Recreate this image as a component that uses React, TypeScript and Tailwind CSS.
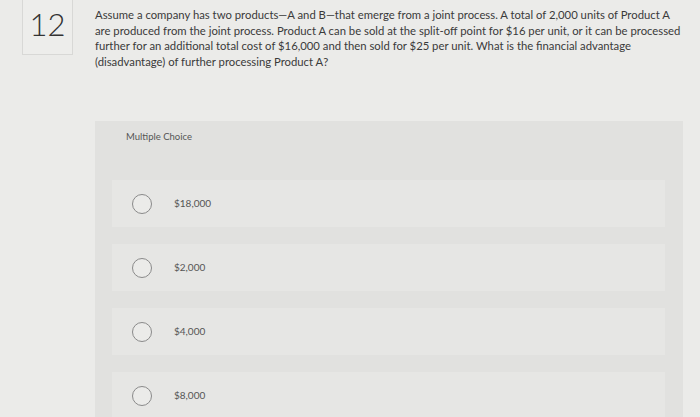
import React from "react";

const options = ["$18,000", "$2,000", "$4,000", "$8,000"];

const lines = [
  "Assume a company has two products—A and B—that emerge from a joint process. A total of 2,000 units of Product A",
  "are produced from the joint process. Product A can be sold at the split-off point for $16 per unit, or it can be processed",
  "further for an additional total cost of $16,000 and then sold for $25 per unit. What is the financial advantage",
  "(disadvantage) of further processing Product A?",
];

export default function App() {
  return (
    <div
      className="w-[700px] h-[417px] overflow-hidden bg-[#ebebe9] flex"
      style={{ fontFamily: "Lato, 'Open Sans', sans-serif" }}
    >
      <div className="pl-[22px] w-[95px] shrink-0">
        <div className="w-[51px] h-[55px] border border-t-0 border-[#d8d8d6] bg-[#ededeb] flex items-center justify-center">
          <span className="text-[31px] font-light text-[#333] leading-none mt-[-6px]">12</span>
        </div>
      </div>
      <div className="flex-1 pr-[17px]">
        <div className="mt-[7px] text-[11.3px] leading-[15.5px] text-[#3a3a3a]">
          {lines.map((l) => (
            <div key={l} className="whitespace-nowrap">{l}</div>
          ))}
        </div>
        <div className="mt-[52px] bg-[#e1e1df] h-[300px] pt-[9px] pl-[17px] pr-[18px]">
          <div className="text-[9.5px] text-[#555] ml-[14px]">Multiple Choice</div>
          <div className="mt-[36px] flex flex-col gap-[17px]">
            {options.map((o) => (
              <div key={o} className="h-[47px] bg-[#e6e6e4] flex items-center">
                <span className="ml-[20px] w-[20px] h-[20px] rounded-full border-[1.5px] border-[#8a8a8a] bg-[#ebebe9]" />
                <span className="ml-[22px] text-[10px] text-[#555]">{o}</span>
              </div>
            ))}
          </div>
        </div>
      </div>
    </div>
  );
}
